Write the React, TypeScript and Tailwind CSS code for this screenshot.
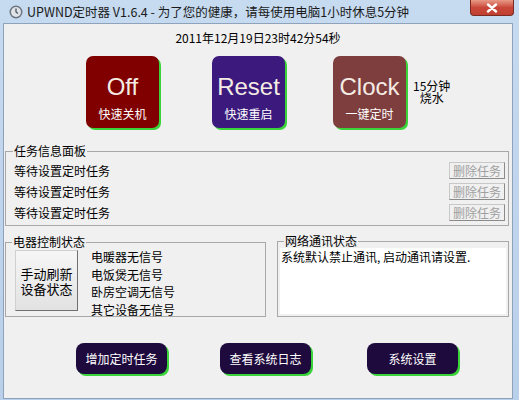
import React from 'react'

const cjk = { fontFamily: '"Noto Sans CJK SC", "Liberation Sans", sans-serif' }

function BigButton({ label, sub, color }: { label: string; sub: string; color: string }) {
  return (
    <div className={`w-[73px] h-[72px] rounded-[7px] flex flex-col items-center shadow-[2px_2px_0_#3ad43a] ${color}`}>
      <div className="mt-[17px] text-[24px] leading-[28px] text-[#f4ece4]" style={{ fontFamily: '"Liberation Sans", sans-serif' }}>{label}</div>
      <div className="mt-[5px] text-[12px] leading-[16px] text-white" style={cjk}>{sub}</div>
    </div>
  )
}

function DelButton() {
  return (
    <div className="w-[56px] h-[17px] border border-[#c8c8c8] border-r-[#8a8a8a] border-b-[#8a8a8a] bg-[#f0f0f0] text-[12px] leading-[15px] text-[#a0a0a0] text-center">
      删除任务
    </div>
  )
}

function NavButton({ label }: { label: string }) {
  return (
    <div className="w-[91px] h-[31px] rounded-[8px] bg-[#1e0a3c] shadow-[2px_2px_0_#3ad43a] text-white text-[12px] flex items-center justify-center">
      {label}
    </div>
  )
}

export default function App() {
  return (
    <div className="w-[519px] h-[400px] bg-gradient-to-b from-[#c6daf0] to-[#b9d0ea] flex flex-col overflow-hidden" style={cjk}>
      {/* title bar */}
      <div className="h-[23px] flex items-center relative">
        <svg width="14" height="14" viewBox="0 0 14 14" className="ml-[9px]">
          <circle cx="7" cy="7" r="6.5" fill="#6b7480" />
          <circle cx="7" cy="7" r="5" fill="#dfe3e8" />
          <path d="M7 3.5V7L9 8.5" stroke="#4a525c" strokeWidth="1.3" fill="none" />
        </svg>
        <span className="ml-[4px] text-[12.5px] text-[#1a1a1a] leading-[16px]">
          UPWND定时器 V1.6.4 - 为了您的健康，请每使用电脑1小时休息5分钟
        </span>
        <div className="absolute right-[5px] top-0 w-[44px] h-[16px] rounded-b-[4px] border border-[#7a2a20] border-t-0 bg-gradient-to-b from-[#e89a88] via-[#c9473a] to-[#c04030] flex items-center justify-center">
          <svg width="12" height="10" viewBox="0 0 12 10">
            <path d="M2 1.5L10 8.5M10 1.5L2 8.5" stroke="#fff" strokeWidth="2.4" strokeLinecap="round" />
          </svg>
        </div>
      </div>

      {/* client area */}
      <div className="ml-[3px] mr-[6px] h-[376px] bg-[#f0f0f0] border border-[#8ea3bb] flex flex-col">
        <div className="h-[26px] flex items-center justify-center text-[12px] text-black pt-[2px]">
          2011年12月19日23时42分54秒
        </div>

        <div className="mt-[6px] h-[74px] flex items-start">
          <div className="ml-[82px]">
            <BigButton label="Off" sub="快速关机" color="bg-[#800000]" />
          </div>
          <div className="ml-[53px]">
            <BigButton label="Reset" sub="快速重启" color="bg-[#3c1a7d]" />
          </div>
          <div className="ml-[48px]">
            <BigButton label="Clock" sub="一键定时" color="bg-[#7f3e3e]" />
          </div>
          <div className="ml-[7px] mt-[24px] text-[12px] leading-[12px] text-black text-center">
            15分钟<br />烧水
          </div>
        </div>

        <fieldset className="mt-[14px] ml-[1px] mr-[3px] h-[82px] border border-[#a8a8a8] pl-[9px] pr-[3px] relative">
          <legend className="ml-[-2px] px-[1px] text-[12px] leading-[14px] text-black">任务信息面板</legend>
          <div className="flex flex-col gap-[4px] mt-[4px]">
            {[0, 1, 2].map((i) => (
              <div key={i} className="flex items-center justify-between h-[17px] text-[12px] text-black">
                <span className="-ml-[1px]">等待设置定时任务</span>
                <DelButton />
              </div>
            ))}
          </div>
        </fieldset>

        <div className="mt-[9px] ml-[1px] mr-[3px] flex gap-[11px]">
          <fieldset className="w-[261px] h-[82px] border border-[#a8a8a8] relative">
            <legend className="ml-[6px] px-[1px] text-[12px] leading-[14px] text-black">电器控制状态</legend>
            <div className="flex">
              <div className="ml-[9px] mt-[1px] w-[63px] h-[61px] bg-gradient-to-b from-[#f6f6f6] to-[#e2e2e2] border border-[#d0d0d0] border-r-[#707070] border-b-[#707070] flex items-center justify-center text-center text-[13px] leading-[15px] text-black">
                手动刷新<br />设备状态
              </div>
              <div className="ml-[13px] -mt-[1px] flex flex-col text-[12px] leading-[17.5px] text-black">
                <span>电暖器无信号</span>
                <span>电饭煲无信号</span>
                <span>卧房空调无信号</span>
                <span>其它设备无信号</span>
              </div>
            </div>
          </fieldset>
          <fieldset className="flex-1 h-[82px] border border-[#a8a8a8] px-[2px] pb-[3px] relative">
            <legend className="ml-[4px] px-[1px] text-[12px] leading-[12px] text-black">网络通讯状态</legend>
            <div className="h-[66px] mt-[1px] bg-white text-[12px] leading-[14px] text-black pl-[1px] pt-[2px]">
              系统默认禁止通讯, 启动通讯请设置.
            </div>
          </fieldset>
        </div>

        <div className="mt-[26px] flex">
          <div className="ml-[72px]"><NavButton label="增加定时任务" /></div>
          <div className="ml-[53px]"><NavButton label="查看系统日志" /></div>
          <div className="ml-[56px]"><NavButton label="系统设置" /></div>
        </div>
      </div>
    </div>
  )
}
